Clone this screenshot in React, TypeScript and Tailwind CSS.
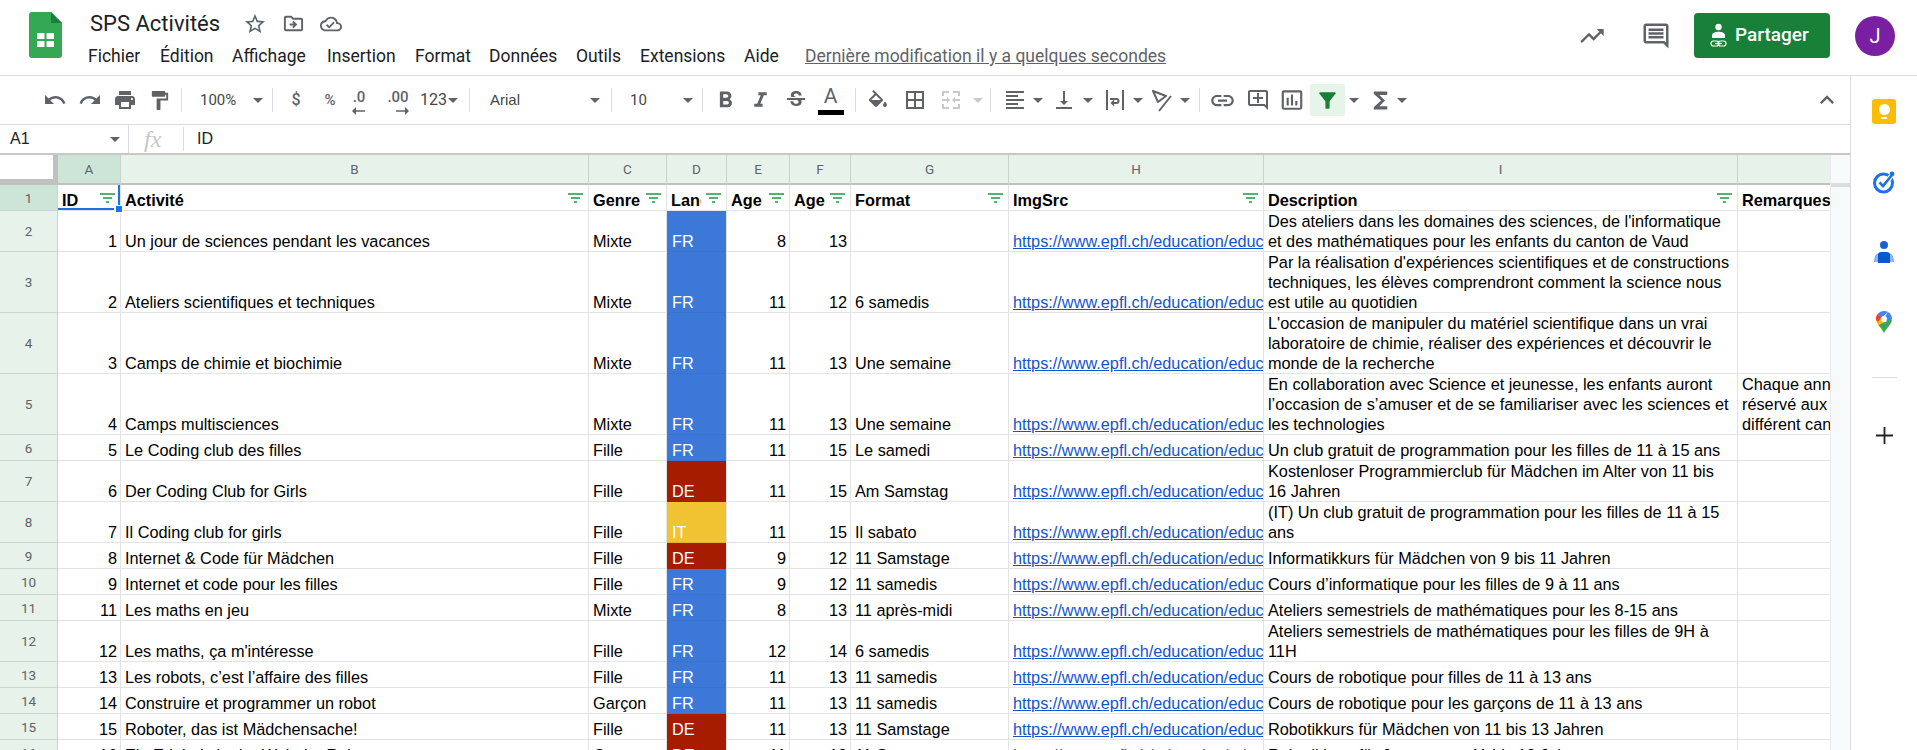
import type { ReactNode } from "react";
import {
  MdBorderAll,
  MdExpandLess,
  MdFilterAlt,
  MdFormatAlignLeft,
  MdFormatBold,
  MdFormatItalic,
  MdFormatPaint,
  MdFunctions,
  MdInsertChartOutlined,
  MdLink,
  MdOutlineAddComment,
  MdOutlineCloudDone,
  MdOutlineComment,
  MdOutlineDriveFileMove,
  MdOutlineStarBorder,
  MdPrint,
  MdRedo,
  MdStrikethroughS,
  MdTrendingUp,
  MdUndo,
  MdVerticalAlignBottom,
} from "react-icons/md";

type Row = {
  n: number;
  h: string;
  id?: string;
  name: string;
  genre?: string;
  lang: "FR" | "DE" | "IT" | "";
  min: string;
  max: string;
  format: string;
  desc: string;
  note?: string[];
};

const URL_TEXT = "https://www.epfl.ch/education/educational-initiatives/";

const rows: Row[] = [
  { n: 2, h: "h-[41px]", id: "1", name: "Un jour de sciences pendant les vacances", genre: "Mixte", lang: "FR", min: "8", max: "13", format: "", desc: "Des ateliers dans les domaines des sciences, de l'informatique et des mathématiques pour les enfants du canton de Vaud" },
  { n: 3, h: "h-[61px]", id: "2", name: "Ateliers scientifiques et techniques", genre: "Mixte", lang: "FR", min: "11", max: "12", format: "6 samedis", desc: "Par la réalisation d'expériences scientifiques et de constructions techniques, les élèves comprendront comment la science nous est utile au quotidien" },
  { n: 4, h: "h-[61px]", id: "3", name: "Camps de chimie et biochimie", genre: "Mixte", lang: "FR", min: "11", max: "13", format: "Une semaine", desc: "L'occasion de manipuler du matériel scientifique dans un vrai laboratoire de chimie, réaliser des expériences et découvrir le monde de la recherche" },
  { n: 5, h: "h-[61px]", id: "4", name: "Camps multisciences", genre: "Mixte", lang: "FR", min: "11", max: "13", format: "Une semaine", desc: "En collaboration avec Science et jeunesse, les enfants auront l’occasion de s’amuser et de se familiariser avec les sciences et les technologies", note: ["Chaque année, un camp est", "réservé aux adolescents d'un", "différent canton"] },
  { n: 6, h: "h-[26px]", id: "5", name: "Le Coding club des filles", genre: "Fille", lang: "FR", min: "11", max: "15", format: "Le samedi", desc: "Un club gratuit de programmation pour les filles de 11 à 15 ans" },
  { n: 7, h: "h-[41px]", id: "6", name: "Der Coding Club for Girls", genre: "Fille", lang: "DE", min: "11", max: "15", format: "Am Samstag", desc: "Kostenloser Programmierclub für Mädchen im Alter von 11 bis 16 Jahren" },
  { n: 8, h: "h-[41px]", id: "7", name: "Il Coding club for girls", genre: "Fille", lang: "IT", min: "11", max: "15", format: "Il sabato", desc: "(IT) Un club gratuit de programmation pour les filles de 11 à 15 ans" },
  { n: 9, h: "h-[26px]", id: "8", name: "Internet & Code für Mädchen", genre: "Fille", lang: "DE", min: "9", max: "12", format: "11 Samstage", desc: "Informatikkurs für Mädchen von 9 bis 11 Jahren" },
  { n: 10, h: "h-[26px]", id: "9", name: "Internet et code pour les filles", genre: "Fille", lang: "FR", min: "9", max: "12", format: "11 samedis", desc: "Cours d’informatique pour les filles de 9 à 11 ans" },
  { n: 11, h: "h-[26px]", id: "11", name: "Les maths en jeu", genre: "Mixte", lang: "FR", min: "8", max: "13", format: "11 après-midi", desc: "Ateliers semestriels de mathématiques pour les 8-15 ans" },
  { n: 12, h: "h-[41px]", id: "12", name: "Les maths, ça m'intéresse", genre: "Fille", lang: "FR", min: "12", max: "14", format: "6 samedis", desc: "Ateliers semestriels de mathématiques pour les filles de 9H à 11H" },
  { n: 13, h: "h-[26px]", id: "13", name: "Les robots, c’est l’affaire des filles", genre: "Fille", lang: "FR", min: "11", max: "13", format: "11 samedis", desc: "Cours de robotique pour filles de 11 à 13 ans" },
  { n: 14, h: "h-[26px]", id: "14", name: "Construire et programmer un robot", genre: "Garçon", lang: "FR", min: "11", max: "13", format: "11 samedis", desc: "Cours de robotique pour les garçons de 11 à 13 ans" },
  { n: 15, h: "h-[26px]", id: "15", name: "Roboter, das ist Mädchensache!", genre: "Fille", lang: "DE", min: "11", max: "13", format: "11 Samstage", desc: "Robotikkurs für Mädchen von 11 bis 13 Jahren" },
  { n: 16, h: "h-[26px]", id: "16", name: "Ein Erlebnis in der Welt der Roboter", genre: "Garçon", lang: "DE", min: "11", max: "13", format: "11 Samstage", desc: "Robotikkurs für Jungen von 11 bis 13 Jahren" },
];

const letters = [
  { l: "A", w: "w-[63px]", dark: true },
  { l: "B", w: "w-[468px]" },
  { l: "C", w: "w-[78px]" },
  { l: "D", w: "w-[60px]" },
  { l: "E", w: "w-[63px]" },
  { l: "F", w: "w-[61px]" },
  { l: "G", w: "w-[158px]" },
  { l: "H", w: "w-[255px]" },
  { l: "I", w: "w-[474px]" },
  { l: "J", w: "w-[300px]" },
];

const headers = [
  { t: "ID", w: "w-[63px]" },
  { t: "Activité", w: "w-[468px]" },
  { t: "Genre", w: "w-[78px]" },
  { t: "Langue", w: "w-[60px]" },
  { t: "Age min", w: "w-[63px]" },
  { t: "Age max", w: "w-[61px]" },
  { t: "Format", w: "w-[158px]" },
  { t: "ImgSrc", w: "w-[255px]" },
  { t: "Description", w: "w-[474px]" },
  { t: "Remarques", w: "w-[300px]" },
];

const LINE = "shadow-[inset_0_-1px_0_#e2e3e3]";

const langStyle = {
  FR: "bg-[#3c78d8] shadow-[inset_0_-1px_0_#3a72cc]",
  DE: "bg-[#a61c00] shadow-[inset_0_-1px_0_#a61c00]",
  IT: "bg-[#f1c232] shadow-[inset_0_-1px_0_#e3b62c]",
  "": "",
};

function Caret({ className = "" }: { className?: string }) {
  return (
    <span
      className={`inline-block h-0 w-0 shrink-0 border-x-[5px] border-t-[5px] border-x-transparent border-t-[#5f6368] ${className}`}
    />
  );
}

function Sep({ className = "" }: { className?: string }) {
  return <span className={`h-[24px] w-px shrink-0 bg-[#dadce0] ${className}`} />;
}

function Tool({ children, className = "w-[35px]" }: { children: ReactNode; className?: string }) {
  return <span className={`flex h-[32px] shrink-0 items-center justify-center text-[#5f6368] ${className}`}>{children}</span>;
}

function SheetsLogo() {
  return (
    <svg width="33" height="46" viewBox="0 0 33 46" className="shrink-0">
      <path d="M3 0h19l11 11v32a3 3 0 0 1-3 3H3a3 3 0 0 1-3-3V3a3 3 0 0 1 3-3z" fill="#34a853" />
      <path d="M22 0l11 11H22z" fill="#188038" />
      <path d="M8 21h17v14H8z" fill="#fff" />
      <path d="M15.500 21h2v14h-2zM8 27h17v2H8z" fill="#34a853" />
    </svg>
  );
}

function ShareIcon() {
  return (
    <svg width="17" height="26" viewBox="0 0 17 26" fill="none" className="shrink-0">
      <circle cx="8.500" cy="4" r="3.200" fill="#fff" />
      <path d="M2 15v-2.500C2 10 5 8.800 8.500 8.800S15 10 15 12.500V15z" fill="#fff" />
      <rect x="1" y="18" width="8" height="5" rx="2.500" stroke="#fff" strokeWidth="1.200" />
      <rect x="8" y="18" width="8" height="5" rx="2.500" stroke="#fff" strokeWidth="1.200" />
      <path d="M5 20.500h7" stroke="#fff" strokeWidth="1.200" />
    </svg>
  );
}

function FillIcon() {
  return (
    <svg width="24" height="24" viewBox="0 0 24 20" fill="#5f6368">
      <path d="M16.560 8.940L7.620 0 6.210 1.410l2.380 2.380-5.150 5.150c-.59.59-.59 1.540 0 2.120l5.500 5.500c.29.29.68.44 1.060.44s.77-.15 1.060-.44l5.500-5.500c.59-.58.59-1.530 0-2.120zM5.210 10L10 5.210 14.790 10H5.210zM19 11.500s-2 2.170-2 3.500c0 1.100.9 2 2 2s2-.9 2-2c0-1.330-2-3.500-2-3.500z" />
    </svg>
  );
}

function DecimalIcon({ label, right }: { label: string; right?: boolean }) {
  return (
    <span className="relative flex h-[30px] flex-col items-center justify-center font-['Roboto',sans-serif] text-[15px] font-medium leading-[18px] text-[#5f6368]">
      <span className="-mt-[6px]">{label}</span>
      <svg width="13" height="8" viewBox="0 0 13 8" className="absolute bottom-0 right-0">
        {right ? <path d="M0 3.200h9V0l4 4-4 4V4.800H0z" fill="#5f6368" /> : <path d="M13 3.200H4V0L0 4l4 4V4.800h9z" fill="#5f6368" />}
      </svg>
    </span>
  );
}

function MergeIcon() {
  return (
    <svg width="20" height="20" viewBox="0 0 20 20" fill="#c8c9cb">
      <path d="M1 1h7v2H3v3H1zM12 1h7v5h-2V3h-5zM1 14h2v3h5v2H1zM17 14h2v5h-7v-2h5zM1 9h5V7l3 3-3 3v-2H1zM19 11h-5v2l-3-3 3-3v2h5z" />
    </svg>
  );
}

function WrapIcon() {
  return (
    <svg width="20" height="22" viewBox="0 0 20 22" fill="#5f6368">
      <path d="M1 1h2v20H1zM17 1h2v20h-2z" />
      <path d="M5 9h6.500a3 3 0 0 1 0 6H9v2.500L5.500 14 9 10.500V13h2.500a1 1 0 0 0 0-2H5z" />
    </svg>
  );
}

function RotateIcon() {
  return (
    <svg width="24" height="24" viewBox="0 0 24 24" fill="none" stroke="#5f6368" strokeWidth="2">
      <path d="M3 3l13 5-8 6z" strokeLinejoin="round" />
      <path d="M21 8L9 23" />
    </svg>
  );
}

function TasksIcon() {
  return (
    <svg width="24" height="24" viewBox="0 0 24 24" fill="none">
      <circle cx="11.500" cy="13" r="9" stroke="#1a73e8" strokeWidth="3" />
      <path d="M7.500 12.500l3.500 3.500 9-11" stroke="#fff" strokeWidth="5" />
      <path d="M7.500 12.500l3.500 3.500 8.500-10.500" stroke="#1a73e8" strokeWidth="2.600" />
      <circle cx="20" cy="4" r="2.400" fill="#1a73e8" />
    </svg>
  );
}

function ContactsIcon() {
  return (
    <svg width="20" height="24" viewBox="0 0 20 24">
      <path d="M0 22c0-6 2-9 6-9h8c4 0 6 3 6 9z" fill="#8ab4f8" />
      <circle cx="10" cy="5" r="4" fill="#1a5fd0" />
      <path d="M4 23v-8c0-2 1.500-3 3-3h6c1.500 0 3 1 3 3v8z" fill="#0b57d0" />
    </svg>
  );
}

function MapsIcon() {
  return (
    <svg width="16" height="22" viewBox="0 0 16 22">
      <path d="M8 22C6.500 18 0 13.500 0 8c0-2 .7-3.800 2-5.200L8 8z" fill="#fbbc04" />
      <path d="M2 2.800L5.500 6 2 11C.7 9.500 0 9 0 8c0-2 .7-3.800 2-5.200z" fill="#ea4335" />
      <path d="M2 2.800C3.500 1 5.600 0 8 0c1.500 0 2.800.4 4 1L5.500 7z" fill="#4285f4" />
      <path d="M12 1c2.400 1.300 4 4 4 7l-5 3-3-4z" fill="#4285f4" />
      <path d="M8 22c1.500-4 8-8.500 8-14L2.500 14c2.500 3 4.500 5 5.500 8z" fill="#34a853" />
      <circle cx="8" cy="8" r="3" fill="#fff" />
    </svg>
  );
}

function FilterMark() {
  return (
    <span className="absolute right-[5px] top-[8px] flex w-[15px] flex-col items-center gap-[2px]">
      <span className="h-[2px] w-[15px] bg-[#52b473]" />
      <span className="h-[2px] w-[9px] bg-[#52b473]" />
      <span className="h-[2px] w-[3px] bg-[#52b473]" />
    </span>
  );
}

function Header() {
  return (
    <header className="flex h-[76px] shrink-0 border-b border-[#dadce0] font-['Roboto',sans-serif]">
      <div className="ml-[29px] mt-[12px]">
        <SheetsLogo />
      </div>
      <div className="ml-[28px] mt-[10px]">
        <div className="flex h-[27px] items-center">
          <span className="w-[131px] whitespace-nowrap text-[22px] leading-[27px] text-[#202124]">SPS Activités</span>
          <span className="ml-[22px] flex items-center gap-[15px] text-[#5f6368]">
            <MdOutlineStarBorder size={24} />
            <MdOutlineDriveFileMove size={23} />
            <MdOutlineCloudDone size={22} />
          </span>
        </div>
        <nav className="-ml-[2px] mt-[9px] flex h-[20px] items-center whitespace-nowrap text-[17.500px] leading-[20px] text-[#202124]">
          <span className="w-[72px]">Fichier</span>
          <span className="w-[72px]">Édition</span>
          <span className="w-[95px]">Affichage</span>
          <span className="w-[88px]">Insertion</span>
          <span className="w-[74px]">Format</span>
          <span className="w-[87px]">Données</span>
          <span className="w-[64px]">Outils</span>
          <span className="w-[104px]">Extensions</span>
          <span className="w-[61px]">Aide</span>
          <span className="text-[#5f6368] underline">Dernière modification il y a quelques secondes</span>
        </nav>
      </div>
      <div className="ml-auto mt-[13px] flex h-[45px] items-center">
        <MdTrendingUp size={28} className="text-[#5f6368]" />
        <MdOutlineComment size={30} className="ml-[35px] text-[#5f6368]" />
        <button className="ml-[23px] flex h-[45px] w-[136px] items-center rounded-[4px] bg-[#188038] pl-[16px] text-[19px] font-medium text-white">
          <ShareIcon />
          <span className="ml-[8px]">Partager</span>
        </button>
        <span className="ml-[25px] mr-[22px] flex h-[40px] w-[40px] items-center justify-center rounded-full bg-[#7b1fa2] text-[20px] text-white">J</span>
      </div>
    </header>
  );
}

function Toolbar() {
  return (
    <div className="flex h-[49px] shrink-0 items-center border-b border-[#dadce0] pl-[37px] font-['Roboto',sans-serif] text-[15px] text-[#444746]">
      <Tool><MdUndo size={24} /></Tool>
      <Tool><MdRedo size={24} /></Tool>
      <Tool><MdPrint size={24} /></Tool>
      <Tool><MdFormatPaint size={23} /></Tool>
      <Sep className="ml-[4px]" />
      <div className="flex w-[90px] shrink-0 items-center justify-between pl-[18px] pr-[9px]">
        <span>100%</span>
        <Caret />
      </div>
      <Sep />
      <Tool className="ml-[6px] w-[34px] text-[16px] font-medium">$</Tool>
      <Tool className="w-[34px] text-[15px] font-medium">%</Tool>
      <Tool className="w-[24px]"><DecimalIcon label=".0" /></Tool>
      <Tool className="ml-[9px] w-[36px]"><DecimalIcon label=".00" right /></Tool>
      <span className="ml-[4px] w-[25px] text-[16px]">123</span>
      <Caret className="ml-[3px]" />
      <Sep className="ml-[11px]" />
      <div className="flex w-[141px] shrink-0 items-center justify-between pl-[20px] pr-[11px] font-['Liberation_Sans',sans-serif]">
        <span>Arial</span>
        <Caret />
      </div>
      <Sep />
      <div className="flex w-[90px] shrink-0 items-center justify-between pl-[18px] pr-[9px]">
        <span>10</span>
        <Caret />
      </div>
      <Sep />
      <Tool className="ml-[5px] w-[35px]"><MdFormatBold size={27} /></Tool>
      <Tool><MdFormatItalic size={25} /></Tool>
      <Tool><MdStrikethroughS size={24} /></Tool>
      <span className="flex h-[32px] w-[35px] shrink-0 flex-col items-center">
        <span className="h-[24px] text-[21px] leading-[24px] text-[#5f6368]">A</span>
        <span className="mt-[2px] h-[5px] w-[26px] bg-black" />
      </span>
      <Sep className="ml-[7px]" />
      <Tool className="ml-[4px] w-[35px]"><FillIcon /></Tool>
      <Tool className="ml-[2px] w-[35px]"><MdBorderAll size={24} /></Tool>
      <Tool className="ml-px w-[35px]"><MergeIcon /></Tool>
      <Caret className="ml-[5px] border-t-[#c8c9cb]" />
      <Sep className="ml-[7px]" />
      <Tool className="ml-[6px] w-[35px]"><MdFormatAlignLeft size={24} /></Tool>
      <Caret className="ml-px" />
      <Tool className="ml-[3px] w-[35px]"><MdVerticalAlignBottom size={24} /></Tool>
      <Caret className="ml-[2px]" />
      <Tool className="ml-[4px] w-[35px]"><WrapIcon /></Tool>
      <Caret className="ml-px" />
      <Tool className="ml-px w-[35px]"><RotateIcon /></Tool>
      <Caret className="ml-px" />
      <Sep className="ml-[9px]" />
      <Tool className="ml-[5px] w-[35px]"><MdLink size={27} /></Tool>
      <Tool><MdOutlineAddComment size={24} /></Tool>
      <Tool className="w-[33px]"><MdInsertChartOutlined size={26} /></Tool>
      <span className="ml-[2px] flex h-[32px] w-[35px] shrink-0 items-center justify-center rounded-[2px] bg-[#e6f4ea] text-[#188038]">
        <MdFilterAlt size={25} />
      </span>
      <Caret className="ml-[4px]" />
      <Tool className="ml-[5px] w-[32px]"><MdFunctions size={27} /></Tool>
      <Caret className="ml-px" />
      <span className="ml-auto mr-[9px] text-[#5f6368]">
        <MdExpandLess size={28} />
      </span>
    </div>
  );
}

function FormulaBar() {
  return (
    <div className="flex h-[30px] shrink-0 items-center border-b-2 border-[#c8c8c8] font-['Liberation_Sans',sans-serif] text-[16px] text-[#202124]">
      <div className="flex h-full w-[129px] shrink-0 items-center justify-between border-r border-[#dadce0] pl-[10px] pr-[8px]">
        <span>A1</span>
        <Caret />
      </div>
      <span className="w-[54px] pl-[15px] font-['Liberation_Serif',serif] text-[24px] italic leading-[24px] text-[#c4c7c5]">fx</span>
      <Sep className="h-[22px]" />
      <span className="pl-[13px]">ID</span>
    </div>
  );
}

function ColumnHeaders() {
  return (
    <div className="flex h-[30px] font-['Roboto',sans-serif] text-[13.500px] text-[#5f6368]">
      <div className="h-full w-[58px] shrink-0 border-b-[6px] border-r-[5px] border-[#c0c0c0] bg-white" />
      {letters.map((c) => (
        <div
          key={c.l}
          className={`flex h-full shrink-0 items-center justify-center border-b-2 border-r border-b-[#c0c0c0] border-r-[#c7d3cb] ${c.dark ? "bg-[#cde5d6]" : "bg-[#e6f2ea]"} ${c.w}`}
        >
          {c.l}
        </div>
      ))}
    </div>
  );
}

function HeaderRow() {
  return (
    <div className="flex h-[26px]">
      <div className="flex h-full w-[58px] shrink-0 items-center justify-center border-b border-r border-[#c8d5cc] bg-[#cde5d6] font-['Roboto',sans-serif] text-[13.500px] text-[#5f6368]">
        1
      </div>
      {headers.map((c) => (
        <div key={c.t} className={`relative flex h-full shrink-0 items-end overflow-hidden whitespace-nowrap border-r border-[#e2e3e3] pb-px pl-[4px] font-bold text-black ${LINE} ${c.w}`}>
          {c.t}
          <span className={`absolute inset-y-0 right-0 w-[25px] bg-white ${LINE}`}>
            <FilterMark />
          </span>
        </div>
      ))}
    </div>
  );
}

function DataRow({ row }: { row: Row }) {
  const cell = "flex h-full shrink-0 items-end overflow-hidden border-r border-[#e2e3e3] pb-px";
  return (
    <div className={`flex ${row.h}`}>
      <div className="flex h-full w-[58px] shrink-0 items-center justify-center border-b border-r border-[#c8d5cc] bg-[#e6f2ea] font-['Roboto',sans-serif] text-[13.500px] text-[#5f6368]">
        {row.n}
      </div>
      <div className={`${cell} ${LINE} w-[63px] justify-end pr-[3px]`}>{row.id}</div>
      <div className={`${cell} ${LINE} w-[468px] whitespace-nowrap pl-[4px]`}>{row.name}</div>
      <div className={`${cell} ${LINE} w-[78px] pl-[4px]`}>{row.genre}</div>
      <div className={`${cell} w-[60px] pl-[5px] text-white ${langStyle[row.lang]}`}>{row.lang}</div>
      <div className={`${cell} ${LINE} w-[63px] justify-end pr-[3px]`}>{row.min}</div>
      <div className={`${cell} ${LINE} w-[61px] justify-end pr-[3px]`}>{row.max}</div>
      <div className={`${cell} ${LINE} w-[158px] whitespace-nowrap pl-[4px]`}>{row.format}</div>
      <div className={`${cell} ${LINE} w-[255px] whitespace-nowrap pl-[4px] text-[#1155cc] underline`}>{URL_TEXT}</div>
      <div className={`${cell} ${LINE} w-[474px] pl-[4px] pr-[3px]`}>
        <span className="block w-full">{row.desc}</span>
      </div>
      <div className={`${cell} ${LINE} w-[300px] pl-[4px]`}>
        {row.note && (
          <span className="block whitespace-nowrap">
            {row.note.map((line) => (
              <span key={line} className="block">{line}</span>
            ))}
          </span>
        )}
      </div>
    </div>
  );
}

function Sheet() {
  return (
    <div className="flex min-h-0 flex-1">
      <div className="relative w-[1830px] shrink-0 overflow-hidden font-['Liberation_Sans',Arial,sans-serif] text-[16.300px] leading-[20px] text-black">
        <ColumnHeaders />
        <HeaderRow />
        {rows.map((row) => (
          <DataRow key={row.n} row={row} />
        ))}
        <span className="absolute left-[58px] top-[53px] h-[2px] w-[56px] bg-[#1a73e8]" />
        <span className="absolute left-[118px] top-[30px] h-[21px] w-[2px] bg-[#1a73e8]" />
        <span className="absolute left-[115px] top-[50px] h-[8px] w-[8px] border border-white bg-[#1a73e8]" />
      </div>
      <div className="flex-1 border-l border-[#e8eaed] bg-[#f8f9fa]">
        <div className="mt-[28px] h-[4px] bg-[#dadce0]" />
      </div>
    </div>
  );
}

function SidePanel() {
  return (
    <aside className="flex w-[67px] shrink-0 flex-col items-center border-l border-[#dadce0]">
      <span className="mt-[23px] flex h-[25px] w-[24px] flex-col items-center justify-center rounded-[3px] bg-[#fbbc04]">
        <span className="h-[11px] w-[11px] rounded-full bg-white" />
        <span className="mt-[2px] h-[2px] w-[6px] bg-white" />
      </span>
      <span className="mt-[46px] flex"><TasksIcon /></span>
      <span className="mt-[46px] flex"><ContactsIcon /></span>
      <span className="mt-[47px] flex"><MapsIcon /></span>
      <span className="mt-[44px] h-px w-[25px] bg-[#dadce0]" />
      <span className="mt-[49px] flex text-[#202124]">
        <svg width="17" height="17" viewBox="0 0 17 17" fill="currentColor"><path d="M7.600 0h1.800v7.600H17v1.800H9.400V17H7.600V9.400H0V7.600h7.600z" /></svg>
      </span>
    </aside>
  );
}

export default function App() {
  return (
    <div className="flex h-[750px] w-[1917px] flex-col overflow-hidden bg-white">
      <Header />
      <div className="flex min-h-0 flex-1">
        <main className="flex w-[1850px] shrink-0 flex-col">
          <Toolbar />
          <FormulaBar />
          <Sheet />
        </main>
        <SidePanel />
      </div>
    </div>
  );
}
